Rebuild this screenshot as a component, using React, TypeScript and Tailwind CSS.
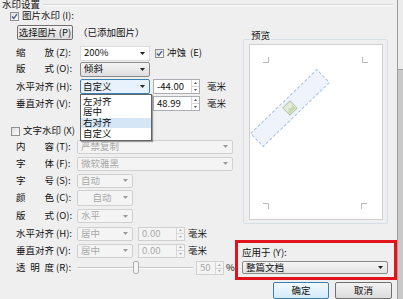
import React from 'react';

const Arrow = ({ color = '#222' }: { color?: string }) => (
  <svg width="5" height="3" viewBox="0 0 5 3" className="shrink-0">
    <path d="M0 0h5L2.5 3z" fill={color} />
  </svg>
);

const Spinner = ({ color = '#555' }: { color?: string }) => (
  <div className="flex h-full w-[8px] shrink-0 flex-col border-l border-[#d6d6d6]">
    <div className="flex flex-1 items-center justify-center border-b border-[#d6d6d6]">
      <svg width="3" height="2" viewBox="0 0 3 2">
        <path d="M0 2h3L1.5 0z" fill={color} />
      </svg>
    </div>
    <div className="flex flex-1 items-center justify-center">
      <svg width="3" height="2" viewBox="0 0 3 2">
        <path d="M0 0h3L1.5 2z" fill={color} />
      </svg>
    </div>
  </div>
);

const Check = ({ checked }: { checked?: boolean }) => (
  <div className="flex h-[9px] w-[9px] shrink-0 items-center justify-center border border-[#8e8f8f] bg-gradient-to-br from-[#dedede] to-[#fbfbfb]">
    {checked && (
      <svg width="7" height="7" viewBox="0 0 7 7">
        <path d="M1 3.6l1.8 1.9L6 1.2" fill="none" stroke="#4a5d8c" strokeWidth="1.4" />
      </svg>
    )}
  </div>
);

// 标签：字分散对齐，后面跟快捷键
const Label = ({ chars, hot, w }: { chars: string[]; hot: string; w: string }) => (
  <div className={`flex shrink-0 items-center ${w}`}>
    <div className="flex w-[38px] justify-between">
      {chars.map((c, i) => (
        <span key={i}>{c}</span>
      ))}
    </div>
    <span className="ml-[2px]">{hot}</span>
  </div>
);

const DisCombo = ({ text, w, h = 'h-[14px]', center }: { text: string; w: string; h?: string; center?: boolean }) => (
  <div className={`flex items-center rounded-[2px] border border-[#d0d0d0] bg-[#f4f4f4] pl-[3px] pr-[4px] text-[#a9a9a9] ${w} ${h}`}>
    <span className={`flex-1 ${center ? 'text-center' : ''}`}>{text}</span>
    <Arrow color="#9a9a9a" />
  </div>
);

const DisSpin = ({ text, w }: { text: string; w: string }) => (
  <div className={`flex h-[14px] items-center border border-[#d0d0d0] bg-[#f4f4f4] text-[#a9a9a9] ${w}`}>
    <span className="flex-1 pl-[3px]">{text}</span>
    <Spinner color="#a9a9a9" />
  </div>
);

const Spin = ({ text }: { text: string }) => (
  <div className="flex h-[15px] w-[47px] items-center border border-[#abadb3] bg-white">
    <span className="flex-1 pl-[3px]">{text}</span>
    <Spinner />
  </div>
);

export default function App() {
  return (
    <div className="flex h-[299px] w-[403px] overflow-hidden bg-[#efefef] font-['Noto_Sans_CJK_SC',sans-serif] text-[9.5px] leading-none text-[#111]">
      <div className="relative flex w-[397px] flex-col">
        {/* 标题 */}
        <div className="flex h-[11px] items-center pl-[2px]">
          <span>水印设置</span>
          <div className="ml-[3px] mr-[4px] flex-1 border-t border-b border-t-[#d5d5d5] border-b-white" />
        </div>

        <div className="flex">
          {/* 左侧 */}
          <div className="flex w-[235px] flex-col">
            <div className="flex h-[12px] items-center pl-[10px]">
              <Check checked />
              <span className="ml-[3px]">图片水印 (I):</span>
            </div>
            <div className="mt-[3px] flex h-[15px] items-center pl-[17px]">
              <div className="flex h-[15px] w-[56px] items-center justify-center rounded-[2px] border border-[#707070] bg-gradient-to-b from-[#f3f3f3] to-[#dcdcdc]">
                选择图片 (P)
              </div>
              <span className="ml-[5px]">（已添加图片）</span>
            </div>

            <div className="mt-[5px] flex h-[16px] items-center pl-[16px]">
              <Label chars={['缩', '放']} hot="(Z):" w="w-[64px]" />
              <div className="flex h-[15px] w-[70px] items-center border border-[#dcdcdc] bg-white pl-[3px] pr-[4px]">
                <span className="flex-1">200%</span>
                <Arrow />
              </div>
              <div className="ml-[5px] flex items-center">
                <Check checked />
                <span className="ml-[3px]">冲蚀</span>
                <span className="ml-[4px]">(E)</span>
              </div>
            </div>

            <div className="flex h-[16px] items-center pl-[16px]">
              <Label chars={['版', '式']} hot="(O):" w="w-[64px]" />
              <div className="flex h-[15px] w-[70px] items-center rounded-[2px] border border-[#8a8a8a] bg-gradient-to-b from-[#f4f4f4] to-[#dedede] pl-[3px] pr-[4px]">
                <span className="flex-1">倾斜</span>
                <Arrow />
              </div>
            </div>

            <div className="mt-[1px] flex h-[17px] items-center pl-[16px]">
              <Label chars={['水', '平', '对', '齐']} hot="(H):" w="w-[64px]" />
              <div className="flex h-[15px] w-[70px] items-center rounded-[2px] border border-[#3c7fb1] bg-[#e8f2fc] pl-[1px] pr-[4px]">
                <span className="flex-1 px-[1px]">自定义</span>
                <Arrow />
              </div>
              <div className="ml-[3px]">
                <Spin text="-44.00" />
              </div>
              <span className="ml-[7px]">毫米</span>
            </div>

            <div className="flex h-[17px] items-center pl-[16px]">
              <Label chars={['垂', '直', '对', '齐']} hot="(V):" w="w-[64px]" />
              <div className="h-[15px] w-[70px]" />
              <div className="ml-[3px]">
                <Spin text="48.99" />
              </div>
              <span className="ml-[7px]">毫米</span>
            </div>

            <div className="mt-[13px] flex h-[12px] items-center pl-[11px]">
              <Check />
              <span className="ml-[3px]">文字水印 (X)</span>
            </div>

            <div className="mt-[1px] flex h-[17px] items-center pl-[16px]">
              <Label chars={['内', '容']} hot="(T):" w="w-[61px]" />
              <DisCombo text="严禁复制" w="w-[156px]" />
            </div>
            <div className="flex h-[17px] items-center pl-[16px]">
              <Label chars={['字', '体']} hot="(F):" w="w-[61px]" />
              <DisCombo text="微软雅黑" w="w-[156px]" />
            </div>
            <div className="flex h-[17px] items-center pl-[16px]">
              <Label chars={['字', '号']} hot="(S):" w="w-[61px]" />
              <DisCombo text="自动" w="w-[56px]" />
            </div>
            <div className="flex h-[17px] items-center pl-[16px]">
              <Label chars={['颜', '色']} hot="(C):" w="w-[61px]" />
              <DisCombo text="自动" w="w-[56px]" h="h-[16px]" center />
            </div>
            <div className="mt-[1px] flex h-[18px] items-center pl-[16px]">
              <Label chars={['版', '式']} hot="(O):" w="w-[61px]" />
              <DisCombo text="水平" w="w-[56px]" />
            </div>
            <div className="flex h-[17px] items-center pl-[16px]">
              <Label chars={['水', '平', '对', '齐']} hot="(H):" w="w-[61px]" />
              <DisCombo text="居中" w="w-[56px]" />
              <div className="ml-[5px]">
                <DisSpin text="0.00" w="w-[47px]" />
              </div>
              <span className="ml-[3px]">毫米</span>
            </div>
            <div className="flex h-[17px] items-center pl-[16px]">
              <Label chars={['垂', '直', '对', '齐']} hot="(V):" w="w-[61px]" />
              <DisCombo text="居中" w="w-[56px]" />
              <div className="ml-[5px]">
                <DisSpin text="0.00" w="w-[47px]" />
              </div>
              <span className="ml-[3px]">毫米</span>
            </div>
            <div className="flex h-[18px] items-center pl-[16px]">
              <Label chars={['透', '明', '度']} hot="(R):" w="w-[61px]" />
              <div className="relative flex h-[14px] w-[116px] items-center">
                <div className="h-[2px] w-full border-t border-b border-t-[#c8c8c8] border-b-white" />
                <div className="absolute left-[56px] top-[0px] h-[13px] w-[6px] rounded-[2px] border border-[#b0b0b0] bg-[#f4f4f4]" />
              </div>
              <div className="ml-[3px]">
                <DisSpin text="50" w="w-[28px]" />
              </div>
              <span className="ml-[2px]">%</span>
            </div>
          </div>

          {/* 右侧 */}
          <div className="flex w-[162px] flex-col">
            <div className="relative ml-[8px] mt-[29px] h-[185px] w-[145px] rounded-[2px] border border-[#d5dfe5]">
              <span className="absolute left-[6px] top-[-9px] bg-[#efefef] px-[1px]">预览</span>
              <div className="ml-[5px] mt-[4px] h-[176px] w-[134px] border border-[#d0d0d0] bg-white">
                <svg width="132" height="174" viewBox="0 0 132 174">
                  <g stroke="#b8b8b8" strokeWidth="1" fill="none">
                    <path d="M18.5 12v5.5H13" />
                    <path d="M112.5 12v5.5H118" />
                    <path d="M18.5 164v-5.5H13" />
                    <path d="M111.5 164v-5.5H117" />
                  </g>
                  <g transform="translate(40 63) rotate(-44)">
                    <rect x="-46" y="-9" width="92" height="18" fill="#eef3fc" stroke="#a9bfe3" strokeDasharray="3 2" />
                    <rect x="-5" y="-5" width="10" height="10" fill="#e4ecd9" stroke="#b9c6ab" />
                    <path d="M-4 2l3-3 2 2 3-2v5h-8z" fill="#c9d8b4" />
                  </g>
                </svg>
              </div>
            </div>

            <div className="mt-[16px] flex h-[40px] flex-col border-[3px] border-[#e1141c] pl-[4px]">
              <span className="mt-[5px] h-[10px]">应用于 (Y):</span>
              <div className="mt-[3px] flex h-[13px] w-[146px] items-center rounded-[2px] border border-[#8a8a8a] bg-gradient-to-b from-[#f6f6f6] to-[#e2e2e2] pl-[3px] pr-[4px]">
                <span className="flex-1">整篇文档</span>
                <Arrow />
              </div>
            </div>

            <div className="mt-[2px] flex pl-[38px]">
              <div className="flex h-[17px] w-[56px] items-center justify-center rounded-[2px] border border-[#3c7fb1] bg-gradient-to-b from-[#f2f9fe] to-[#d4ebfa]">
                确定
              </div>
              <div className="ml-[6px] flex h-[17px] w-[57px] items-center justify-center rounded-[2px] border border-[#707070] bg-gradient-to-b from-[#f3f3f3] to-[#dcdcdc]">
                取消
              </div>
            </div>
          </div>
        </div>

        {/* 下拉列表 */}
        <div className="absolute left-[80px] top-[94px] flex h-[47px] w-[72px] flex-col border border-[#646464] bg-white py-[1px] shadow-[1px_1px_1px_rgba(0,0,0,0.35)]">
          <div className="flex h-[11px] items-center pl-[2px]">左对齐</div>
          <div className="flex h-[11px] items-center pl-[2px]">居中</div>
          <div className="flex h-[11px] items-center bg-[#d5e6f7] pl-[2px]">右对齐</div>
          <div className="flex h-[11px] items-center pl-[2px]">自定义</div>
        </div>
      </div>

      {/* 右侧滚动条 */}
      <div className="flex w-[6px] flex-col border-l border-[#9c9c9c] bg-[#c9c9c9]">
        <div className="h-[70px] border-b border-[#a0a0a0] bg-[#ececec]" />
      </div>
    </div>
  );
}
